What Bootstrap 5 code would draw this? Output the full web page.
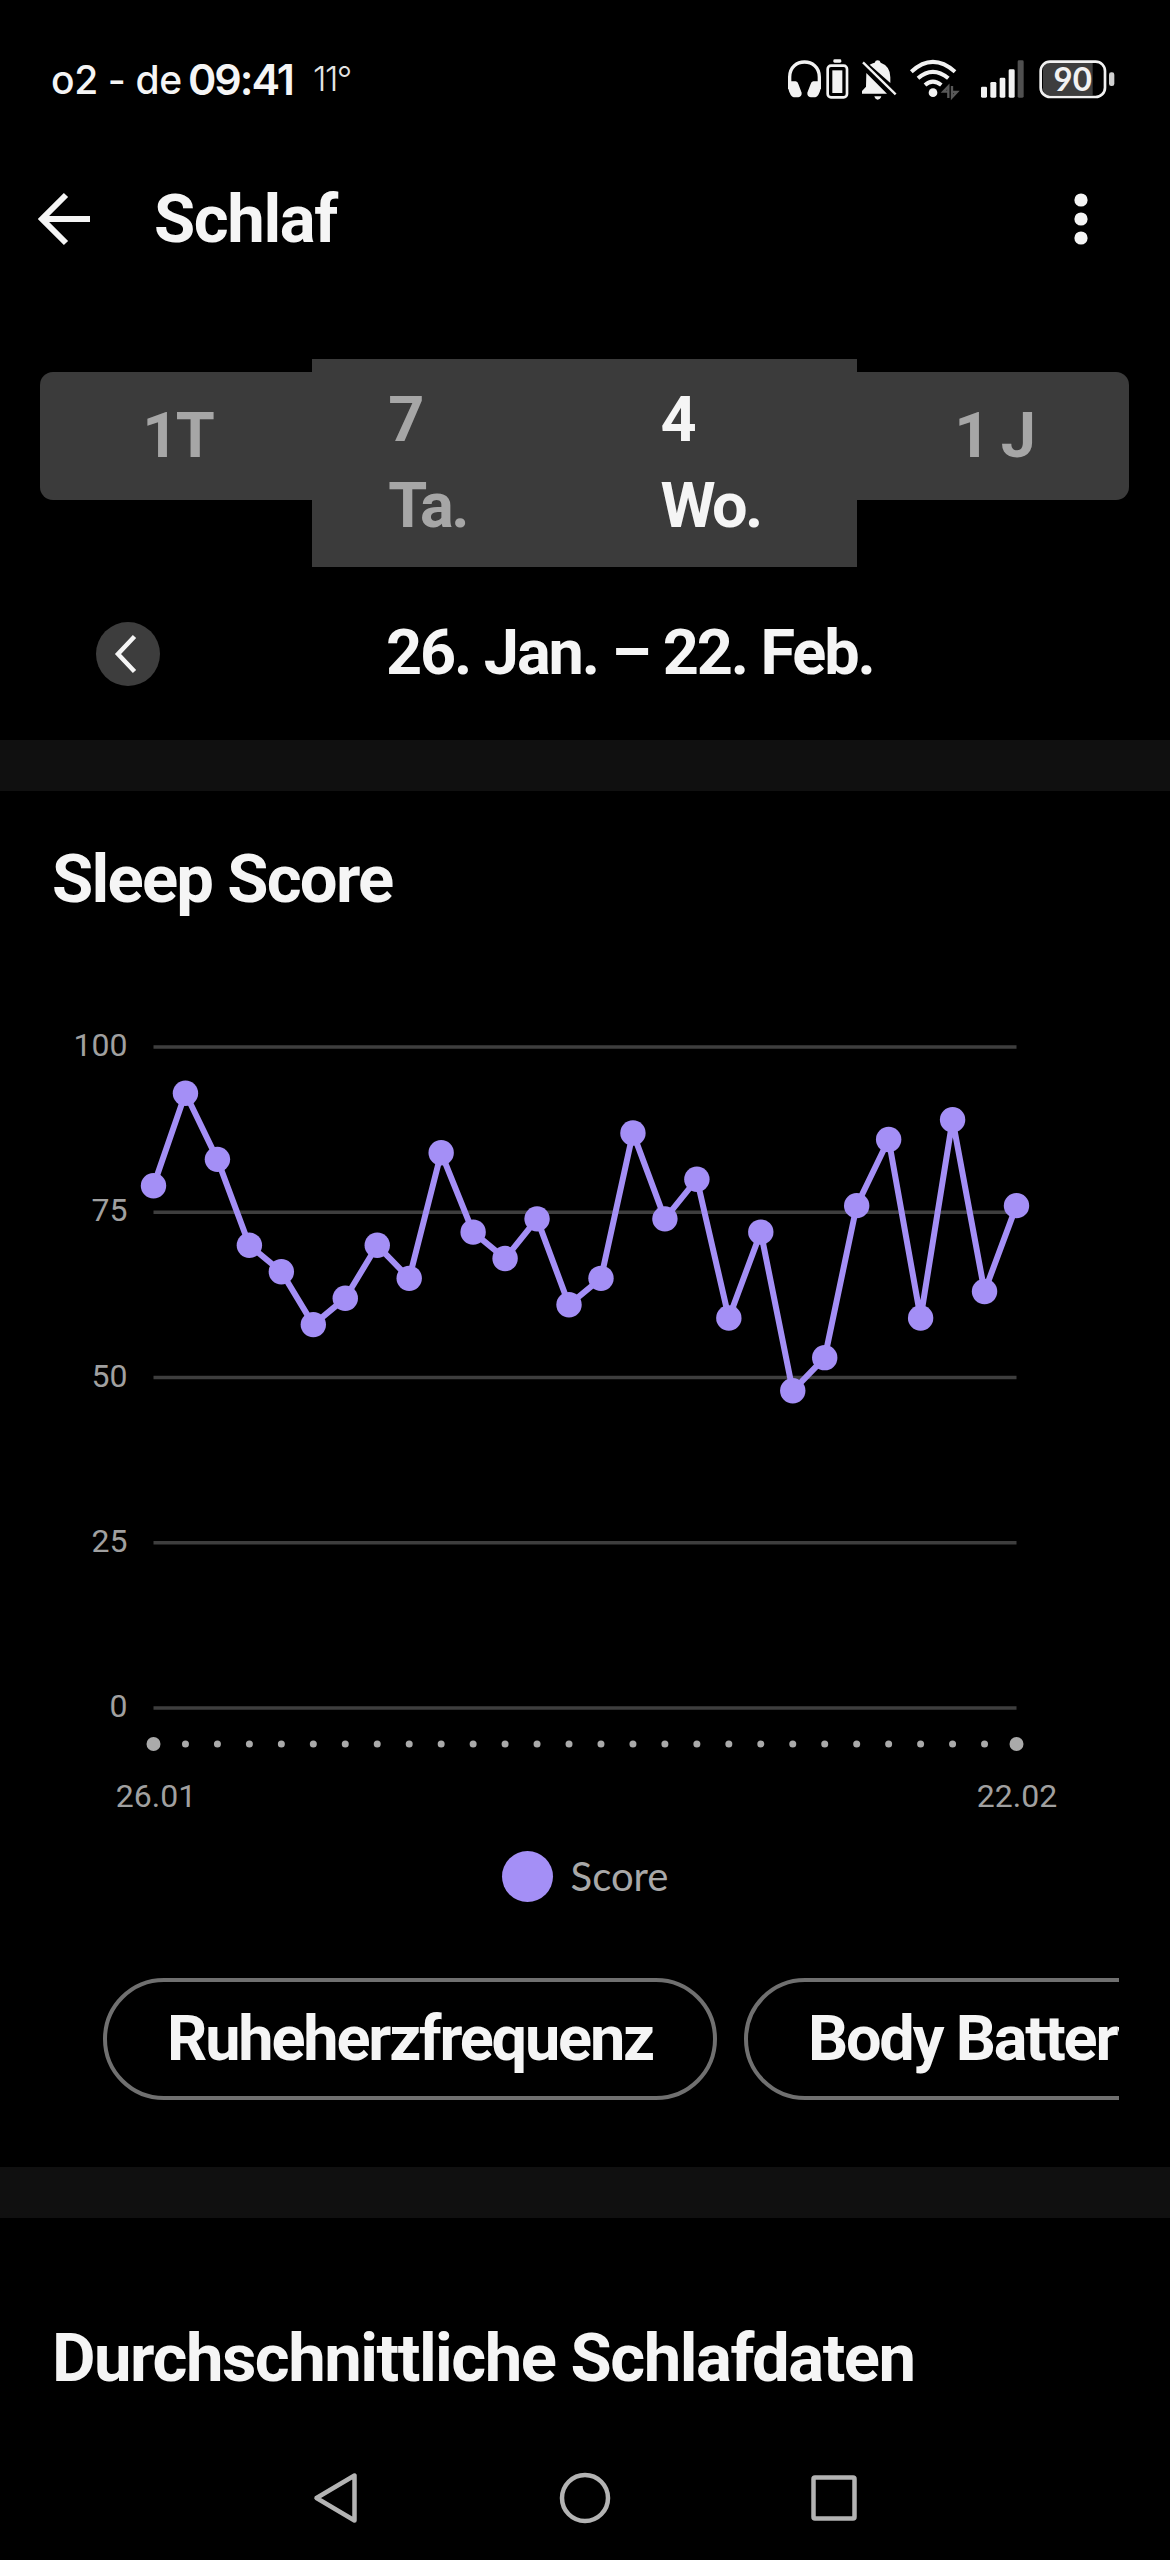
<!DOCTYPE html>
<html lang="de">
<head>
<meta charset="utf-8">
<meta name="viewport" content="width=device-width, initial-scale=1">
<title>Schlaf</title>
<link href="https://cdn.jsdelivr.net/npm/bootstrap@5.3.0/dist/css/bootstrap.min.css" rel="stylesheet">
<style>
  body { background: #000; color: #f5f5f5; font-family: Roboto, "Liberation Sans", sans-serif; width: 1170px; height: 2560px; overflow: hidden; }
  svg { display: block; flex: none; }
  .statusbar { height: 158px; padding: 0 55px 0 51px; font-family: Inter, Roboto, sans-serif; }
  .carrier { font-size: 39px; font-weight: 500; line-height: 1; width: 131px; white-space: nowrap; letter-spacing: -.4px; }
  .clock { font-size: 43px; font-weight: 600; line-height: 1; margin-left: 6px; letter-spacing: -2px; }
  .temp { font-size: 34px; font-weight: 300; line-height: 1; margin-left: 20px; color: #e4e4e4; letter-spacing: -1.5px; }
  .appbar { height: 122px; padding: 0 82px 0 38px; }
  .heading { font-size: 67px; font-weight: 700; line-height: 80px; margin: 0; white-space: nowrap; letter-spacing: -1.55px; }
  .appbar .heading { margin-left: 63px; letter-spacing: -1.4px; }
  .periods { margin: 79px 41px 0 40px; height: 208px; }
  .period { flex: 0 0 25%; background: #3b3b3b; color: #a6a6a6; font-size: 63px; font-weight: 700; line-height: 86px; padding: 18px 76px; letter-spacing: -2.6px; }
  .period.single { padding: 21px 0 21px 2px; margin-top: 13px; height: 128px; text-align: center; }
  .period.first { border-radius: 13px 0 0 13px; }
  .period.last { border-radius: 0 13px 13px 0; }
  .period.current { color: #f5f5f5; }
  .daterow { height: 173px; padding-left: 96px; }
  .prev { width: 64px; height: 64px; background: #3d3d3d; }
  .daterange { font-size: 63px; font-weight: 700; line-height: 80px; margin: -2px 0 0 226px; white-space: nowrap; letter-spacing: -2.1px; }
  .band { height: 51px; background: #101010; }
  .scorecard { height: 1376px; }
  .scorecard .heading { padding: 48px 0 0 52px; letter-spacing: -1.75px; }
  .legend { height: 60px; gap: 18px; color: #a8a8a8; font: 400 40px/60px Lato, "Noto Sans", sans-serif; }
  .swatch { width: 51px; height: 51px; background: #a48ff6; }
  .chips { margin: 72px 51px 0 103px; gap: 27px; overflow: hidden; }
  .chip { flex: none; height: 122px; border: 4px solid #707070; border-radius: 61px; padding: 0 60px; font-size: 63px; font-weight: 700; line-height: 113px; white-space: nowrap; letter-spacing: -2.17px; }
  .avg .heading { padding: 100px 0 0 52px; letter-spacing: -1.5px; }
  .avg { height: 226px; }
  .sysnav { height: 108px; padding: 0 313px 0 313px; }
</style>
</head>
<body>
<header class="statusbar d-flex align-items-center">
  <span class="carrier">o2 - de</span><span class="clock">09:41</span><span class="temp">11°</span>
  <div class="ms-auto d-flex align-items-center">
    <svg width="328" height="44" viewBox="50 50 984 132" fill="none">
      <path d="M58 146V110C58 50 147 50 147 110V146" stroke="#f2f2f2" stroke-width="10"/>
      <path d="M53 142V123H76Q82 124 84 131L94 157Q95 168 84 171H70Q60 169 53 142ZM152 142V123H129Q123 124 121 131L111 157Q110 168 121 171H135Q145 169 152 142Z" fill="#f2f2f2"/>
      <rect x="189" y="57" width="24" height="10" rx="4" fill="#f2f2f2"/><rect x="172" y="76" width="58" height="95" rx="10" stroke="#f2f2f2" stroke-width="8"/><rect x="186" y="90" width="30" height="68" fill="#f2f2f2"/>
      <path d="M298 73Q306 69 313 67Q315 60 322 60Q329 60 331 67Q360 77 360 111V128ZM288 98L350 160H275V152L287 139Z" fill="#f2f2f2"/>
      <path d="M278 66L376 162" stroke="#f2f2f2" stroke-width="7"/><path d="M312 168H333Q330 178 322 178Q315 178 312 168Z" fill="#f2f2f2"/>
      <path d="M423 94Q487 35 554 94M443 114Q487 75 534 114M464 134Q487 114 513 134" stroke="#f2f2f2" stroke-width="12"/><circle cx="488" cy="157" r="13" fill="#f2f2f2"/>
      <path d="M534 173V138L519 154H534M545 137V171L560 155H545" stroke="#585858" stroke-width="7"/>
      <g fill="#f2f2f2"><rect x="632" y="139" width="18" height="33" rx="4"/><rect x="660" y="125" width="18" height="47" rx="4"/><rect x="688" y="112" width="17" height="60" rx="4"/><rect x="715" y="87" width="18" height="85" rx="4"/></g><rect x="742" y="60" width="18" height="112" rx="4" fill="#505050"/>
      <path d="M832 68H967V165H832Q818 162 818 145V88Q818 71 832 68Z" fill="#3e3e3e"/><rect x="811" y="64" width="193" height="106" rx="28" stroke="#f2f2f2" stroke-width="8"/><rect x="1016" y="96" width="16" height="41" rx="7" fill="#d0d0d0"/>
      <text x="907" y="151" text-anchor="middle" font-size="99" font-weight="700" font-family="Lato, sans-serif" fill="#f2f2f2">90</text>
    </svg>
  </div>
</header>
<nav class="appbar d-flex align-items-center">
  <svg width="53" height="54" viewBox="0 0 53 54" fill="none" stroke="#f5f5f5" stroke-width="6"><path d="M52 27H5M28 3L4 27L28 51"/></svg>
  <h1 class="heading">Schlaf</h1>
  <svg class="ms-auto" width="14" height="54" viewBox="0 0 14 54" fill="#f5f5f5"><circle cx="7" cy="8" r="6.6"/><circle cx="7" cy="27" r="6.6"/><circle cx="7" cy="46" r="6.6"/></svg>
</nav>
<main>
  <div class="periods d-flex align-items-start">
    <div class="period single first">1T</div>
    <div class="period">7<br>Ta.</div>
    <div class="period current">4<br>Wo.</div>
    <div class="period single last">1 J</div>
  </div>
  <div class="daterow d-flex align-items-center">
    <div class="prev rounded-circle"><svg width="64" height="64" fill="none" stroke="#f5f5f5" stroke-width="4.5"><path d="M38.500 14.500L22 32L38.500 49.500"/></svg></div>
    <div class="daterange">26. Jan. – 22. Feb.</div>
  </div>
  <div class="band"></div>
  <section class="scorecard">
    <h2 class="heading">Sleep Score</h2>
    <svg id="chart" width="1170" height="927" viewBox="0 919 1170 927" font-family="Roboto, sans-serif" font-size="32" fill="#a0a0a0"></svg>
    <div class="legend d-flex align-items-center justify-content-center"><span class="swatch rounded-circle"></span><span>Score</span></div>
    <div class="chips d-flex"><div class="chip">Ruheherzfrequenz</div><div class="chip">Body Battery</div></div>
  </section>
  <div class="band"></div>
  <section class="avg"><h2 class="heading">Durchschnittliche Schlafdaten</h2></section>
</main>
<footer class="sysnav d-flex justify-content-between align-items-center">
  <svg width="46" height="54" viewBox="0 0 46 54" fill="none" stroke="#b3b3b3" stroke-width="4.500" stroke-linejoin="round"><path d="M41.500 4.500V49.500L3.500 27Z"/></svg>
  <svg width="54" height="54" fill="none" stroke="#b3b3b3" stroke-width="4.500"><circle cx="27" cy="27" r="23"/></svg>
  <svg width="46" height="54" fill="none" stroke="#b3b3b3" stroke-width="4.500"><rect x="2.500" y="6.500" width="41" height="41" rx="1.500"/></svg>
</footer>
<script src="https://cdn.jsdelivr.net/npm/bootstrap@5.3.0/dist/js/bootstrap.bundle.min.js"></script>
<script>
  const scores = [79,93,83,70,66,58,62,70,65,84,72,68,74,61,65,87,74,80,59,72,48,53,76,86,59,89,63,76];
  const left = 153.5, right = 1016.5, zero = 1708, unit = 6.61;
  const step = (right - left) / (scores.length - 1);
  const px = i => left + i * step, py = v => zero - v * unit;
  let s = '';
  for (const v of [100, 75, 50, 25, 0])
    s += `<path d="M${left} ${py(v)}H${right}" stroke="#3e3e3e" stroke-width="3.5"/><text x="127.5" y="${py(v) + 9}" text-anchor="end">${v}</text>`;
  s += `<polyline points="${scores.map((v, i) => px(i) + ',' + py(v)).join(' ')}" fill="none" stroke="#a48ff6" stroke-width="6"/>`;
  scores.forEach((v, i) => {
    const edge = i === 0 || i === scores.length - 1;
    s += `<circle cx="${px(i)}" cy="${py(v)}" r="12.7" fill="#a48ff6"/><circle cx="${px(i)}" cy="1744" r="${edge ? 7 : 3.5}" fill="#aaa"/>`;
  });
  s += `<text x="156" y="1807" text-anchor="middle">26.01</text><text x="1017" y="1807" text-anchor="middle">22.02</text>`;
  document.getElementById('chart').innerHTML = s;
</script>
</body>
</html>
